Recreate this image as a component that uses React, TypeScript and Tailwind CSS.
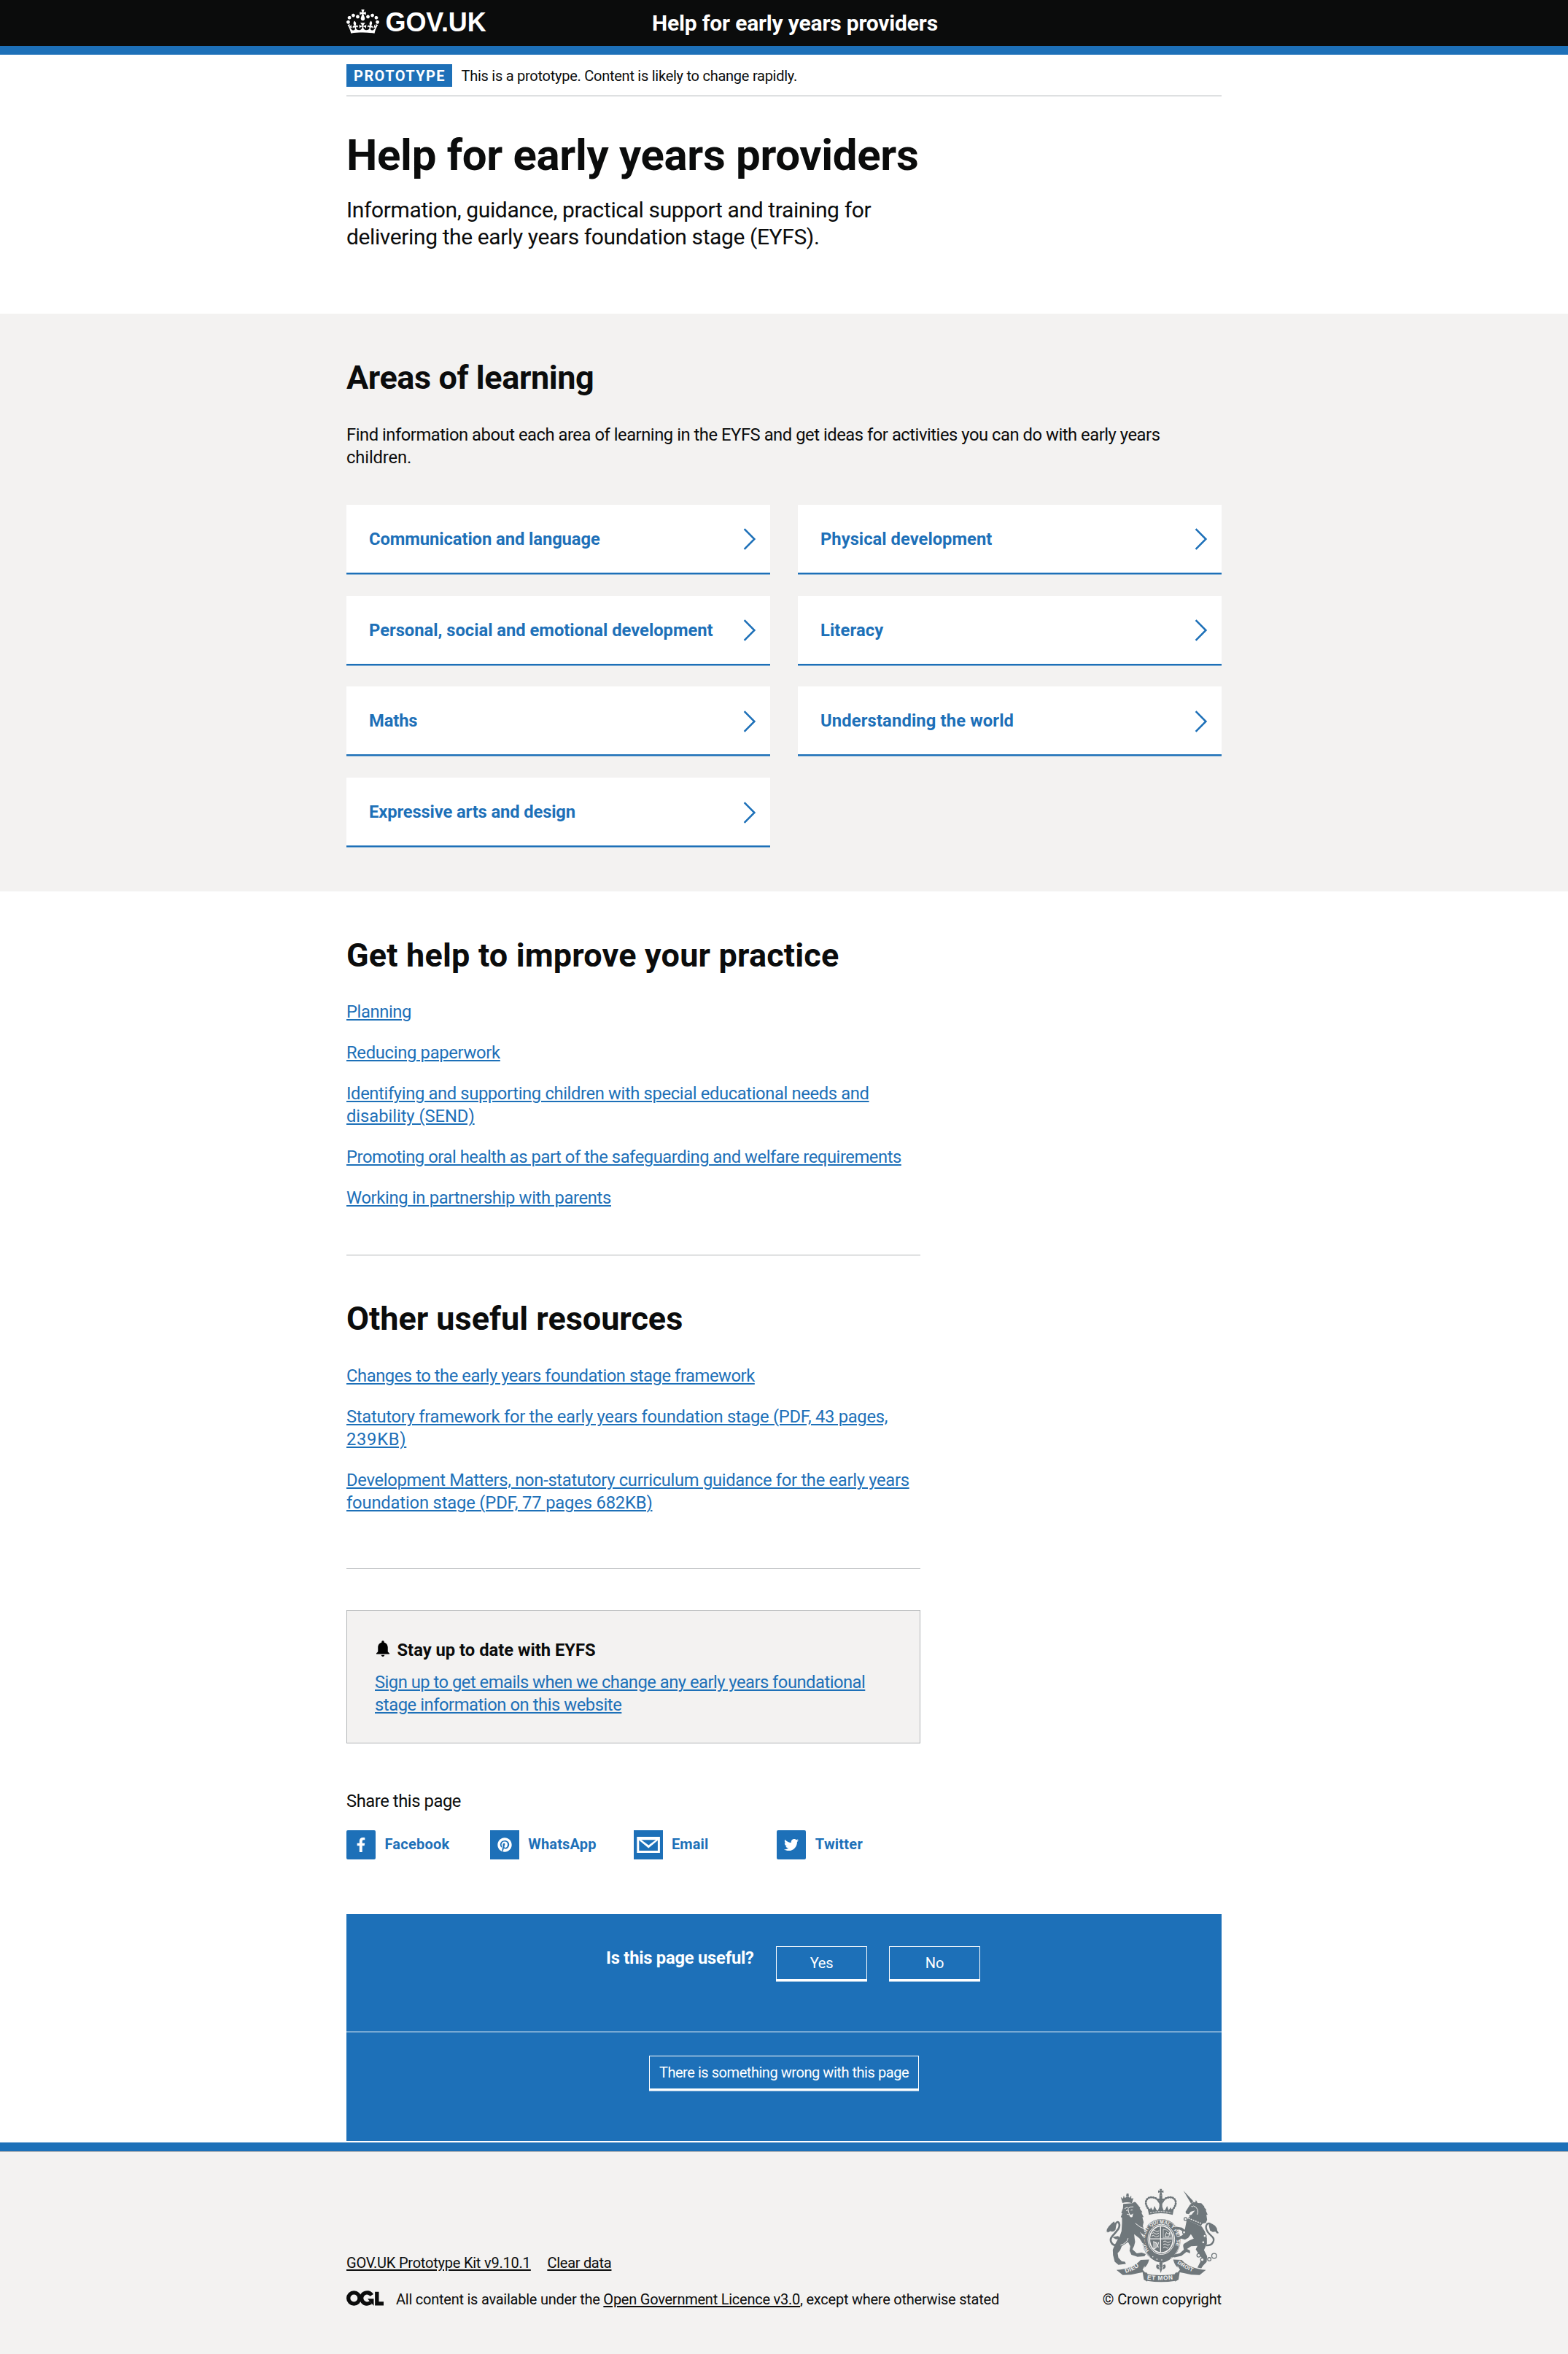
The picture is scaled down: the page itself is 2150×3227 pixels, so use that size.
import React from 'react';
import { FaFacebookF, FaPinterest, FaTwitter } from 'react-icons/fa';

type Line = [text: string, tracking: string];

function GovCrown() {
  return (
    <svg viewBox="0 0 132 97" className="h-[33px] w-[45px] shrink-0 fill-white" aria-hidden="true">
      <path d="M25 30.2c3.5 1.5 7.7-.2 9.1-3.7 1.5-3.6-.2-7.8-3.9-9.2-3.6-1.4-7.6.3-9.1 3.9-1.4 3.5.3 7.5 3.9 9zM9 39.5c3.6 1.5 7.8-.2 9.2-3.7 1.5-3.6-.2-7.8-3.9-9.1-3.6-1.5-7.6.2-9.1 3.8-1.4 3.5.3 7.5 3.8 9zM4.4 57.2c3.5 1.5 7.7-.2 9.1-3.8 1.5-3.6-.2-7.7-3.9-9.1-3.5-1.5-7.6.3-9.1 3.8-1.4 3.5.3 7.6 3.9 9.1zm38.3-21.4c3.5 1.5 7.7-.2 9.1-3.8 1.5-3.6-.2-7.7-3.9-9.1-3.6-1.5-7.6.3-9.1 3.8-1.3 3.6.4 7.7 3.9 9.1zm64.4-5.6c-3.6 1.5-7.8-.2-9.1-3.7-1.5-3.6.2-7.8 3.8-9.2 3.6-1.4 7.7.3 9.2 3.9 1.3 3.5-.4 7.5-3.9 9zm15.9 9.3c-3.6 1.5-7.7-.2-9.1-3.7-1.5-3.6.2-7.8 3.7-9.1 3.6-1.5 7.7.2 9.2 3.8 1.5 3.5-.3 7.5-3.8 9zm4.7 17.7c-3.6 1.5-7.8-.2-9.2-3.8-1.5-3.6.2-7.7 3.9-9.1 3.6-1.5 7.7.3 9.2 3.8 1.3 3.5-.4 7.6-3.9 9.1zM89.3 35.8c-3.6 1.5-7.8-.2-9.2-3.8-1.4-3.6.2-7.7 3.9-9.1 3.6-1.5 7.7.3 9.2 3.8 1.4 3.6-.3 7.7-3.9 9.1zM69.7 17.7l8.9 4.7V9.3l-8.9 2.8c-.2-.3-.5-.6-.9-.9L72.4 0H59.6l3.5 11.2c-.3.3-.6.5-.9.9l-8.8-2.8v13.1l8.8-4.7c.3.3.6.7.9.9l-5 15.4v.1c-.2.8-.4 1.6-.4 2.4 0 4.1 3.1 7.5 7 8.1h.2c.3 0 .7.1 1 .1.4 0 .7 0 1-.1h.2c4-.6 7.1-4.1 7.1-8.1 0-.8-.1-1.7-.4-2.4V34l-5.1-15.4c.4-.2.7-.6 1-.9zM66 92.8c16.9 0 32.8 1.1 47.1 3.2 4-16.9 8.9-26.7 14-33.5l-9.6-3.4c1 4.9 1.1 7.2 0 10.2-1.5-1.4-3-4.3-4.2-8.7L108.6 76c2.8-2 5-3.2 7.5-3.3-4.4 9.4-10 11.9-13.6 11.2-4.3-.8-6.3-4.6-5.6-7.9 1-4.7 5.7-5.9 8-.5 4.3-8.7-3-11.4-7.6-8.8 7.1-7.2 7.9-13.5 2.1-21.1-8 6.1-8.1 12.3-4.5 20.8-4.7-5.4-12.1-2.5-9.5 6.2 3.4-5.2 7.9-2 7.2 3.1-.6 4.3-6.4 7.8-13.5 7.2-10.3-.9-10.9-8-11.2-13.8 2.5-.5 7.1 1.8 11 7.3L80.2 60c-4.1 4.4-8 5.3-12.3 5.4 1.4-4.4 8-11.6 8-11.6H55.5s6.4 7.2 7.9 11.6c-4.2-.1-8-1-12.3-5.4l1.4 16.4c3.9-5.5 8.5-7.7 10.9-7.3-.3 5.8-.9 12.8-11.1 13.8-7.2.6-12.9-2.9-13.5-7.2-.7-5 3.8-8.3 7.1-3.1 2.7-8.7-4.6-11.6-9.4-6.2 3.7-8.5 3.6-14.7-4.6-20.8-5.8 7.6-5 13.9 2.2 21.1-4.7-2.6-11.9.1-7.7 8.8 2.3-5.5 7.1-4.2 8.1.5.7 3.3-1.3 7.1-5.7 7.9-3.5.7-9-1.8-13.5-11.2 2.5.1 4.7 1.3 7.5 3.3l-4.7-15.4c-1.2 4.4-2.7 7.2-4.3 8.7-1.1-3-.9-5.3 0-10.2l-9.5 3.4c5 6.9 9.9 16.7 14 33.5 14.8-2.1 30.8-3.2 47.7-3.2z" />
    </svg>
  );
}

function Card({ label, tracking }: { label: string; tracking: string }) {
  return (
    <a className="flex h-[93px] items-center justify-between bg-white pr-[19px] pl-[31px] shadow-[0_2.5px_0_#1d70b8]">
      <span className={`mt-[2px] text-[23.75px] leading-[31px] font-bold whitespace-nowrap text-[#1d70b8] ${tracking}`}>{label}</span>
      <svg viewBox="0 0 18 30" className="mt-[2px] h-[30px] w-[18px] shrink-0" fill="none" stroke="#1d70b8" strokeWidth="2.5" aria-hidden="true">
        <path d="M1.6 1.2 15.4 15 1.6 28.8" />
      </svg>
    </a>
  );
}

function SectionHeading({ children, className }: { children: string; className: string }) {
  return <h2 className={`text-[45px] leading-[50px] font-bold ${className}`}>{children}</h2>;
}

function LinkLines({ lines }: { lines: Line[] }) {
  return (
    <a className="block text-[23.75px] leading-[31px] text-[#1d70b8]">
      {lines.map(([text, tracking]) => (
        <span key={text} className="block whitespace-nowrap">
          <span className={`underline decoration-2 underline-offset-[2px] ${tracking}`}>{text}</span>
        </span>
      ))}
    </a>
  );
}

function MailIcon() {
  return (
    <svg viewBox="0 0 40 40" className="h-10 w-10" fill="none" aria-hidden="true">
      <rect x="5.8" y="10.5" width="28.6" height="19" stroke="#fff" strokeWidth="3" />
      <path d="M7 12h26.4v1.6L20.2 24.6 7 13.6z" fill="#fff" />
      <path d="M10.4 13.2h19.8l-9.9 7.4z" fill="#1d70b8" />
    </svg>
  );
}

function ShareItem({ label, tracking, children, rounded }: { label: string; tracking: string; children: React.ReactNode; rounded?: boolean }) {
  return (
    <a className="flex w-[197px] items-center">
      <span className={`flex h-10 w-10 items-center justify-center bg-[#1d70b8] text-white ${rounded ? 'rounded-[2px]' : ''}`}>{children}</span>
      <span className={`mb-[2px] ml-[12.5px] text-[20px] leading-[25px] font-bold text-[#1d70b8] ${tracking}`}>{label}</span>
    </a>
  );
}

function FeedbackButton({ children, className }: { children: string; className: string }) {
  return (
    <button className={`flex h-[46px] items-center justify-center border border-white text-[20px] leading-[25px] whitespace-nowrap text-white shadow-[0_2.5px_0_#fff] ${className}`}>
      {children}
    </button>
  );
}

function OglLogo() {
  return (
    <svg viewBox="0 0 483.2 195.7" className="h-[21px] w-[51px] shrink-0" fill="none" stroke="#0b0c0c" strokeWidth="50.7" aria-label="Open Government Licence">
      <circle cx="97.8" cy="97.8" r="72.4" />
      <path d="M329 59A72.4 72.4 0 1 0 316 152" />
      <path d="M275 105.700h80v87.800h-3z" fill="#0b0c0c" stroke="none" />
      <path d="M396.200 16v152.100h87" />
    </svg>
  );
}

function RoyalArms() {
  const light = '#f3f2f1';
  return (
    <svg viewBox="105 88 467 388" className="h-[129px] w-[157px] overflow-visible" fill="#6f777b" stroke="none" aria-hidden="true">
      <defs>
        <path id="garter" d="M285 344A66 66 0 1 1 381 344" />
        <path id="dieu" d="M188 437Q232 424 262 393" />
        <path id="etmon" d="M276 463Q333 470 392 461" />
        <path id="droit" d="M400 396Q434 424 484 438" />
      </defs>
      {/* crown */}
      <path d="M328 90h10l-2 8 8-2v10l-8-2 3 12h-12l3-12-8 2V96l8 2z" />
      <path d="M327 116h12v14h6v7h-6v30h-12v-30h-6v-7h6z" />
      <path d="M285 176C258 146 275 122 300 125Q322 128 328 150M381 176C408 146 391 122 366 125Q344 128 338 150" fill="none" stroke="#6f777b" strokeWidth="5" />
      <path d="M285 176C258 146 275 122 300 125Q322 128 328 150M381 176C408 146 391 122 366 125Q344 128 338 150" fill="none" stroke="#6f777b" strokeWidth="9" strokeDasharray="0 9.500" strokeLinecap="round" />
      <path d="M284 197l-5-26 9 6 4-11 9 12 6-18 8 17 6 3 6-16h12l6 16 6-3 8-17 6 18 9-12 4 11 9-6-5 26Q333 184 284 197z" />
      <path d="M289 189Q333 178 377 189" fill="none" stroke={light} strokeWidth="3" strokeDasharray="7 4" />

      {/* garter and shield */}
      <ellipse cx="335" cy="302" rx="79" ry="88" />
      <ellipse cx="335" cy="302" rx="77" ry="85" fill="none" stroke={light} strokeWidth="2" />
      <ellipse cx="335" cy="298" rx="55" ry="62" fill="none" stroke={light} strokeWidth="3" />
      <ellipse cx="335" cy="298" rx="51" ry="58" fill={light} />
      <ellipse cx="335" cy="298" rx="46" ry="53" />
      <path d="M332 245v106M289 296h91" stroke={light} strokeWidth="4" />
      <path d="M299 264q8-7 13 0t14-2M296 274q8-7 13 0t16-2M295 285q8-7 13 0t17-2M343 320q8-7 13 0t14-2M343 332q8-7 12 0t10-2M343 308q8-7 13 0t18-2" fill="none" stroke={light} strokeWidth="3" />
      <path d="M343 256q32 4 34 36H343z" fill="none" stroke={light} strokeWidth="2" />
      <path d="M350 287l6-17 7 6 7-6-4 18zM301 308q18 2 22 24M304 306v32q16-4 20-28M310 308v27M316 309v22" fill="none" stroke={light} strokeWidth="3" />
      <g fontFamily="Liberation Sans" fontWeight="700" fill={light}>
        <text fontSize="20"><textPath href="#garter">HONI SOIT QUI MAL Y PENSE</textPath></text>
      </g>
      <path d="M288 361q24 20 46 22 28-2 44-22l-6 18q-18 14-37 16-26-4-45-22z" />
      <g fill={light}><circle cx="300" cy="370" r="2.500" /><circle cx="317" cy="380" r="2.500" /><circle cx="337" cy="383" r="2.500" /></g>

      {/* lion */}
      <path d="M175 148l-7-24 9 5 3-11 8 10 4-19h8l2 17 9-8 1 12 8-2-6 21Q194 142 175 148z" />
      <path d="M173 128q20-11 42-1" fill="none" stroke={light} strokeWidth="3" strokeDasharray="4 4" />
      <path d="M178 152l38-3q11-12 19 3l14 17-3 2 11 15-4 2 9 18-5 1 5 20-3 15 5 18 2 18-11-3-9-9 19 32 4 20q-12-2-16-12l-8-12-22-17 2 17 2 14-4 17-7 14 18 17 20-3 17 6-5 9-29 2-25-8-8-17 3-19-9-17-26 17-7 18-10 11 3 19 14 15 13 1 4 9-31 4-15-13-7-27-1-22 8-20 13-24-8 1-13-8 6-3 16-3 5 6 9-26 2-32 0-23-5-3 6-15-4-2 7-20z" />
      <path d="M184 171l10-5 5 4 8-5 13-1M190 180q4-5 8 1M209 178q7-3 8 0M198 172l2 13 5 12-12-3" fill="none" stroke={light} strokeWidth="3" />
      <path d="M202 193q8 7 17-2l-3 14q-7 5-11-2z" fill={light} />
      <path d="M198 293q-4 20-31 29M228 232q20 18 36 22" fill="none" stroke={light} strokeWidth="3" />
      <path d="M153 323C128 324 120 300 132 286 150 264 169 250 160 230Q151 220 141 244" fill="none" stroke="#6f777b" strokeWidth="8" />
      <path d="M105 272q6-7 6-16 8-16 29-32l6 12 4-3-4 26q-10 12-20 5l-12 6-3-5z" />

      {/* unicorn */}
      <path d="M426 97l41 44-9 10z" />
      <path d="M435 184l18-28 14-12 8 2 3-10 7 12 15 1 13 14-2 2 10 12-2 3 7 16-5 1 3 20-5 13-17 4-45-20-8-14 11-4 14-17-18 5-7 10-12-2z" />
      <path d="M467 160q12 3 17 14t-1 22M459 162l7 1" fill="none" stroke={light} strokeWidth="3" />
      <path d="M449 205l58 24-8 14-58-24z" />
      <path d="M447 211l54 22" stroke={light} strokeWidth="4" strokeDasharray="6 4" />
      <path d="M440 217l62 28 13 21 8 28 0 22-12 26 13 26-2 23-15 16-7 10-16-3 10-19 9-20-15-18-11-18 7-14-26 1-17 12 12 6 1 12-15-6-21 16-28 6-15-2 7-8 29-6 17-15-3-16 2-8 23-14 19-8-12-18-11 15-13 7-17-4-14 8-9-11 14-5 13-5 15-15-7 1-17-10-16 0-7-7 9-5 23 4 12 9z" />
      <path d="M520 323C550 324 558 298 544 286 527 271 511 252 524 235Q540 226 538 249" fill="none" stroke="#6f777b" strokeWidth="7" />
      <path d="M572 272q-8-9-8-20-10-17-29-22l-4 11 5 21 11 6 11-2 7 8z" />
      <g fill={light} stroke="#6f777b" strokeWidth="4">
        <circle cx="435" cy="214" r="6" /><circle cx="429" cy="269" r="6" /><circle cx="514" cy="284" r="6" /><circle cx="508" cy="310" r="6" /><circle cx="489" cy="364" r="7" /><circle cx="504" cy="382" r="7" /><circle cx="533" cy="380" r="7" /><circle cx="553" cy="366" r="10" />
      </g>

      {/* motto ribbon and fleur */}
      <path d="M316 402q9-2 14 8l-4-12 7-10 8 10-4 12q6-10 14-8 6 12-5 18l-8 2-5 15-5-15-8-2q-10-6-4-18z" />
      <path d="M323 410q8 0 6 10M345 410q-8 0-6 10" fill="none" stroke={light} strokeWidth="3" />
      <path d="M150 424q68-4 100-41l35-2q-7 27-23 36l16 23-1 32-14-8-5-30q-36 7-48 10l-34 1z" />
      <path d="M519 424q-68-4-100-41l-35-2q7 27 23 36l-16 23 1 32 14-8 5-30q36 7 48 10l34 1z" />
      <path d="M266 407q-2 21 20 28h-18l-10-12zM402 407q2 21-18 28h18l10-12z" fill={light} />
      <path d="M263 439q70 14 142 0l-12 30q-59 10-116 0z" />
      <g fontFamily="Liberation Sans" fontWeight="700" fill={light}>
        <text fontSize="25" letterSpacing="1"><textPath href="#dieu">DIEU</textPath></text>
        <text fontSize="25" letterSpacing="2"><textPath href="#etmon">ET MON</textPath></text>
        <text fontSize="22" letterSpacing="1"><textPath href="#droit">DROIT</textPath></text>
      </g>
    </svg>
  );
}

const cards: Line[] = [
  ['Communication and language', 'tracking-[-0.003em]'],
  ['Physical development', 'tracking-[0.001em]'],
  ['Personal, social and emotional development', 'tracking-[-0.0005em]'],
  ['Literacy', 'tracking-[0.005em]'],
  ['Maths', 'tracking-[-0.005em]'],
  ['Understanding the world', 'tracking-[0.006em]'],
  ['Expressive arts and design', 'tracking-[-0.0055em]'],
];

const practiceLinks: Line[][] = [
  [['Planning', 'tracking-[-0.0168em]']],
  [['Reducing paperwork', 'tracking-[-0.0125em]']],
  [
    ['Identifying and supporting children with special educational needs and', 'tracking-[-0.0152em]'],
    ['disability (SEND)', 'tracking-[-0.002em]'],
  ],
  [['Promoting oral health as part of the safeguarding and welfare requirements', 'tracking-[-0.0185em]']],
  [['Working in partnership with parents', 'tracking-[-0.0135em]']],
];

const resourceLinks: Line[][] = [
  [['Changes to the early years foundation stage framework', 'tracking-[-0.0185em]']],
  [
    ['Statutory framework for the early years foundation stage (PDF, 43 pages,', 'tracking-[-0.012em]'],
    ['239KB)', 'tracking-[0.030em]'],
  ],
  [
    ['Development Matters, non-statutory curriculum guidance for the early years', 'tracking-[-0.0125em]'],
    ['foundation stage (PDF, 77 pages 682KB)', 'tracking-[-0.007em]'],
  ],
];

export default function App() {
  return (
    <div className="min-h-[3227px] w-full bg-white font-['Roboto',sans-serif] text-[#0b0c0c]">
      <header className="bg-[#0b0c0c]">
        <div className="mx-auto flex h-[63px] w-[1200px] items-start text-white">
          <div className="flex w-[419px] items-start">
            <div className="pt-[13px]"><GovCrown /></div>
            <span className="ml-[8.5px] pt-[11px] font-['Liberation_Sans',sans-serif] text-[36px] leading-10 font-bold tracking-[-0.003em]">GOV.UK</span>
          </div>
          <span className="pt-[13px] text-[30px] leading-[37.5px] font-bold tracking-[-0.006em] whitespace-nowrap">Help for early years providers</span>
        </div>
        <div className="h-3 bg-[#1d70b8]" />
      </header>

      <div className="mx-auto w-[1200px]">
        <div className="flex items-center border-b border-[#b1b4b6] pt-[13px] pb-3">
          <strong className="flex h-[31px] w-[145px] justify-center bg-[#1d70b8] pl-px text-[20px] leading-[32px] tracking-[0.070em] text-white">PROTOTYPE</strong>
          <span className="ml-[12.5px] text-[20px] leading-[32px] tracking-[-0.0128em] -mb-px">This is a prototype. Content is likely to change rapidly.</span>
        </div>
        <h1 className="mt-[50px] text-[60px] leading-[62.5px] font-bold tracking-[-0.0056em]">Help for early years providers</h1>
        <p className="mt-[24px] text-[30px] leading-[37.5px]">
          <span className="block tracking-[-0.0125em]">Information, guidance, practical support and training for</span>
          <span className="block tracking-[-0.0130em]">delivering the early years foundation stage (EYFS).</span>
        </p>
      </div>

      <section className="mt-[86.500px] bg-[#f3f2f1] pt-[63px] pb-[62.750px]">
        <div className="mx-auto w-[1200px]">
          <SectionHeading className="tracking-[-0.0094em]">Areas of learning</SectionHeading>
          <p className="mt-[38px] text-[23.75px] leading-[31px]">
            <span className="block whitespace-nowrap tracking-[-0.0193em]">Find information about each area of learning in the EYFS and get ideas for activities you can do with early years</span>
            <span className="block tracking-[-0.005em]">children.</span>
          </p>
          <div className="mt-[48.750px] grid grid-cols-2 gap-x-[38px] gap-y-[31.750px]">
            {cards.map(([label, tracking]) => (
              <Card key={label} label={label} tracking={tracking} />
            ))}
          </div>
        </div>
      </section>

      <main className="mx-auto w-[1200px] pt-[63.500px]">
        <div className="w-[787px]">
          <SectionHeading className="tracking-[0.0039em]">Get help to improve your practice</SectionHeading>
          <div className="mt-[37px] flex flex-col gap-[25px]">
            {practiceLinks.map((lines) => (
              <LinkLines key={lines[0][0]} lines={lines} />
            ))}
          </div>
          <hr className="mt-[61.750px] border-t border-[#b1b4b6]" />
          <SectionHeading className="mt-[62px] tracking-[-0.0002em]">Other useful resources</SectionHeading>
          <div className="mt-[38px] flex flex-col gap-[25px]">
            {resourceLinks.map((lines) => (
              <LinkLines key={lines[0][0]} lines={lines} />
            ))}
          </div>
          <hr className="mt-[74px] border-t border-[#b1b4b6]" />

          <aside className="mt-14 h-[183px] border border-[#b1b4b6] bg-[#f3f2f1] px-[38px] pt-[39px]">
            <div className="flex items-start">
              <svg viewBox="4 2.5 16 19.5" className="mt-[2px] ml-[2px] h-[22px] w-[18px]" aria-hidden="true">
                <path d="M12 22c1.100 0 2-.9 2-2h-4c0 1.100.890 2 2 2zm6-6v-5c0-3.070-1.640-5.640-4.500-6.320V4c0-.830-.670-1.500-1.500-1.500s-1.500.670-1.500 1.500v.680C7.630 5.360 6 7.920 6 11v5l-2 2v1h16v-1l-2-2z" />
              </svg>
              <h3 className="ml-[10.5px] text-[23.75px] leading-[31px] font-bold tracking-[0em]">Stay up to date with EYFS</h3>
            </div>
            <div className="mt-[13px]">
              <LinkLines
                lines={[
                  ['Sign up to get emails when we change any early years foundational', 'tracking-[-0.0212em]'],
                  ['stage information on this website', 'tracking-[-0.0185em]'],
                ]}
              />
            </div>
          </aside>

          <p className="mt-[64px] text-[23.75px] leading-[31px] tracking-[-0.018em]">Share this page</p>
          <div className="mt-[24px] flex">
            <ShareItem label="Facebook" tracking="tracking-[0.0115em]" rounded><FaFacebookF size={20} /></ShareItem>
            <ShareItem label="WhatsApp" tracking="tracking-[0.0085em]"><FaPinterest size={20} /></ShareItem>
            <ShareItem label="Email" tracking="tracking-[0.005em]"><MailIcon /></ShareItem>
            <ShareItem label="Twitter" tracking="tracking-[0.012em]" rounded><FaTwitter size={20} /></ShareItem>
          </div>
        </div>

        <section className="mt-[75px] mb-[2px] bg-[#1d70b8]">
          <div className="flex h-[162px] items-start border-b border-white pt-[44px] pl-[356px]">
            <span className="mt-px w-[233px] text-[23.75px] leading-[31px] font-bold tracking-[-0.0101em] text-white">Is this page useful?</span>
            <FeedbackButton className="w-[125px] tracking-[-0.01em]">Yes</FeedbackButton>
            <FeedbackButton className="ml-[30px] w-[125px] tracking-[-0.01em]">No</FeedbackButton>
          </div>
          <div className="flex h-[149px] justify-center pt-8">
            <FeedbackButton className="w-[370px] tracking-[-0.0225em]">There is something wrong with this page</FeedbackButton>
          </div>
        </section>
      </main>

      <div className="h-3 bg-[#1d70b8]" />
      <footer className="h-[278px] border-t border-[#b1b4b6] bg-[#f3f2f1] pt-[50px]">
        <div className="mx-auto flex w-[1200px] items-end justify-between text-[20px] leading-[25px]">
          <div>
            <div className="flex gap-[23px] underline decoration-2 underline-offset-[2px]">
              <a className="tracking-[-0.011em]">GOV.UK Prototype Kit v9.10.1</a>
              <a className="tracking-[-0.015em]">Clear data</a>
            </div>
            <div className="mt-[25px] flex items-start">
              <OglLogo />
              <span className="ml-[17px] tracking-[-0.012em]">
                All content is available under the{' '}
                <a className="underline decoration-2 underline-offset-[2px]">Open Government Licence v3.0</a>, except where otherwise stated
              </span>
            </div>
          </div>
          <div className="flex flex-col items-end">
            <div className="mr-[3px]"><RoyalArms /></div>
            <span className="mt-[11px] tracking-[-0.0070em]">© Crown copyright</span>
          </div>
        </div>
      </footer>
    </div>
  );
}
